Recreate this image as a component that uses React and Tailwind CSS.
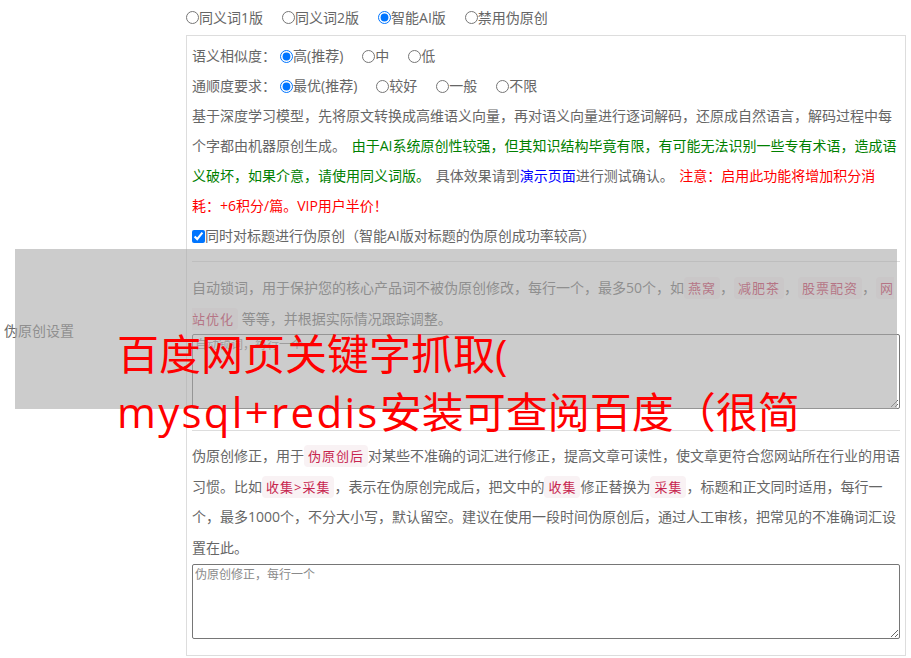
import React from "react";

const Radio = ({ name, label, checked }) => (
  <label className="inline-flex items-center mr-[19px] whitespace-nowrap">
    <input
      type="radio"
      name={name}
      defaultChecked={checked}
      className="m-0 w-[13px] h-[13px] shrink-0"
    />
    <span>{label}</span>
  </label>
);

const Code = ({ children }) => (
  <span className="text-[13px] leading-[14px] tracking-[1px] text-[#c7254e] bg-[#f9f2f4] rounded-[4px] px-[4px] py-[2px]">
    {children}
  </span>
);

const Area = ({ placeholder }) => (
  <div className="pb-[11px]">
    <textarea
      placeholder={placeholder}
      className="block w-full h-[75px] border border-[#767676] rounded-[2px] p-[2px] text-[12px] leading-[16px] placeholder:text-[#8a8a8a] resize-y"
    />
  </div>
);

export default function App() {
  return (
    <div className="relative w-[911px] h-[658px] overflow-hidden bg-white text-[14px] text-[#666] font-['Microsoft_YaHei','Open_Sans','Noto_Sans_CJK_SC',sans-serif]">
      <div className="flex h-[660px]">
        <div className="w-[186px] shrink-0 flex items-center pl-[4px]">
          伪原创设置
        </div>
        <div className="flex flex-col">
          <div className="h-[35px] flex items-center">
            <Radio name="ver" label="同义词1版" />
            <Radio name="ver" label="同义词2版" />
            <Radio name="ver" label="智能AI版" checked />
            <Radio name="ver" label="禁用伪原创" />
          </div>
          <div className="w-[720px] border border-[#ddd] p-[5px]">
            <div className="leading-[30px]">
              <div className="flex items-center h-[30px]">
                <span className="mr-[4px]">语义相似度：</span>
                <Radio name="sim" label="高(推荐)" checked />
                <Radio name="sim" label="中" />
                <Radio name="sim" label="低" />
              </div>
              <div className="flex items-center h-[30px]">
                <span className="mr-[4px]">通顺度要求：</span>
                <Radio name="flu" label="最优(推荐)" checked />
                <Radio name="flu" label="较好" />
                <Radio name="flu" label="一般" />
                <Radio name="flu" label="不限" />
              </div>
              <p className="[word-spacing:2px]">
                基于深度学习模型，先将原文转换成高维语义向量，再对语义向量进行逐词解码，还原成自然语言，解码过程中每个字都由机器原创生成。{" "}
                <span className="text-[#008000]">
                  由于AI系统原创性较强，但其知识结构毕竟有限，有可能无法识别一些专有术语，造成语义破坏，如果介意，请使用同义词版。
                </span>{" "}
                具体效果请到<span className="text-[#0000ff]">演示页面</span>进行测试确认。{" "}
                <span className="text-[#ff0000]">
                  注意：启用此功能将增加积分消耗：+6积分/篇。VIP用户半价！
                </span>
              </p>
              <label className="flex items-center h-[30px]">
                <input
                  type="checkbox"
                  defaultChecked
                  className="m-0 w-[13px] h-[13px]"
                />
                <span>同时对标题进行伪原创（智能AI版对标题的伪原创成功率较高）</span>
              </label>
            </div>
            <hr className="my-[10px] border-[#ddd]" />
            <p className="leading-[31px]">
              自动锁词，用于保护您的核心产品词不被伪原创修改，每行一个，最多50个，如<Code>燕窝</Code>，<Code>减肥茶</Code>，<Code>股票配资</Code>，<Code>网站优化</Code> 等等，并根据实际情况跟踪调整。
            </p>
            <Area placeholder="自动锁词，每行一个" />
            <hr className="my-[10px] border-[#ddd]" />
            <p className="leading-[30.7px]">
              伪原创修正，用于<Code>伪原创后</Code>对某些不准确的词汇进行修正，提高文章可读性，使文章更符合您网站所在行业的用语习惯。比如<Code>收集&gt;采集</Code>，表示在伪原创完成后，把文中的<Code>收集</Code>修正替换为<Code>采集</Code>，标题和正文同时适用，每行一个，最多1000个，不分大小写，默认留空。建议在使用一段时间伪原创后，通过人工审核，把常见的不准确词汇设置在此。
            </p>
            <Area placeholder="伪原创修正，每行一个" />
          </div>
        </div>
      </div>

      <div className="absolute left-[15px] top-[249px] w-[882px] h-[160px] bg-[rgba(170,170,170,0.6)]" />
      <div className="absolute left-[117px] top-[325px] text-[42px] leading-[58px] text-[#ff0000] whitespace-nowrap">
        <div>百度网页关键字抓取(</div>
        <div>
          <span className="tracking-[2.3px]">mysql+redis</span>安装可查阅百度（很简
        </div>
      </div>
    </div>
  );
}
